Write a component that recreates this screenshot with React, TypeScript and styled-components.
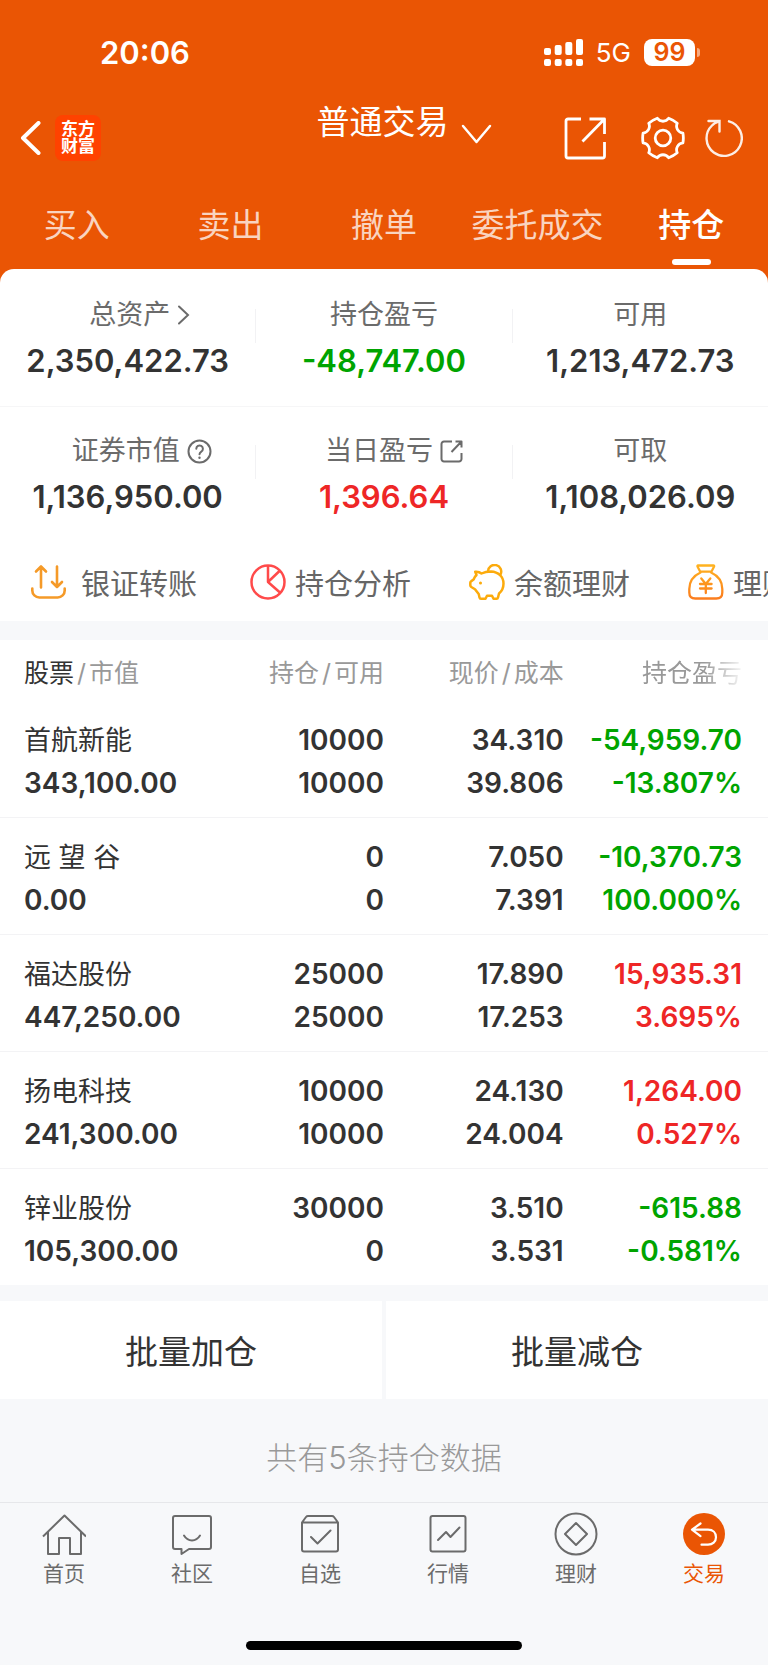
import React, { useState } from 'react';
import styled, { createGlobalStyle, css } from 'styled-components';

type Tone = 'normal' | 'up' | 'down';

interface Stat {
  label: string;
  value: string;
  tone?: Tone;
  icon?: React.ReactNode;
  indent?: number;
}

interface Holding {
  name: string;
  marketValue: string;
  position: string;
  available: string;
  price: string;
  cost: string;
  profit: string;
  profitRate: string;
  tone: Tone;
}

const toneColors: Record<Tone, string> = {
  normal: '#333333',
  up: '#ee2626',
  down: '#00a400',
};

const GlobalStyle = createGlobalStyle`
  * {
    box-sizing: border-box;
  }

  body {
    margin: 0;
    background: #f7f8fa;
    color: #333333;
    font-family: Inter, 'Noto Sans CJK SC', sans-serif;
  }

  button {
    margin: 0;
    padding: 0;
    border: 0;
    background: none;
    color: inherit;
    font: inherit;
    cursor: pointer;
  }

  svg {
    display: block;
    flex: none;
  }
`;

const Page = styled.div`
  display: flex;
  flex-direction: column;
`;

const Hero = styled.header`
  background: #ea5504;
  color: #ffffff;
`;

const StatusBar = styled.div`
  display: flex;
  align-items: center;
  justify-content: space-between;
  height: 98px;
  padding: 6px 68px 0 100px;
`;

const Clock = styled.span`
  font-size: 31px;
  font-weight: 600;
`;

const StatusIcons = styled.div`
  display: flex;
  align-items: center;
  gap: 13px;
`;

const Network = styled.span`
  font-size: 26px;
`;

const Battery = styled.div`
  display: flex;
  align-items: center;
  gap: 2px;
`;

const BatteryLevel = styled.span`
  width: 51px;
  border-radius: 8px;
  background: #ffffff;
  color: #ea5504;
  font-size: 25px;
  font-weight: 600;
  line-height: 27px;
  text-align: center;
`;

const BatteryTip = styled.span`
  width: 3px;
  height: 9px;
  border-radius: 0 4px 4px 0;
  background: rgba(255, 255, 255, 0.5);
`;

const TitleBar = styled.div`
  display: flex;
  align-items: center;
  height: 80px;
`;

const TitleSide = styled.div<{ $end?: boolean }>`
  display: flex;
  flex: 1;
  align-items: center;
  gap: ${({ $end }) => ($end ? '0' : '14px')};
  justify-content: ${({ $end }) => ($end ? 'flex-end' : 'flex-start')};
  padding: ${({ $end }) => ($end ? '0 25px 0 0' : '0 0 0 20px')};
`;

const Logo = styled.div`
  width: 46px;
  padding: 6px 0;
  border-radius: 8px;
  background: #ff4200;
  font-size: 17px;
  font-weight: 700;
  line-height: 17px;
  text-align: center;
`;

const AccountSwitch = styled.button`
  display: flex;
  align-self: flex-start;
  gap: 12px;
  padding-left: 45px;
  font-size: 33px;
  line-height: 49px;

  svg {
    margin-top: 26px;
  }
`;

const ToolButton = styled.button<{ $gap: number }>`
  margin-left: ${({ $gap }) => $gap}px;
`;

const Tabs = styled.nav`
  display: grid;
  grid-template-columns: repeat(5, 1fr);
`;

const Tab = styled.button<{ $active: boolean }>`
  display: flex;
  flex-direction: column;
  align-items: center;
  gap: 10px;
  padding: 23px 0 4px;
  color: ${({ $active }) => ($active ? '#ffffff' : 'rgba(255, 255, 255, 0.75)')};
  font-size: 33px;
  font-weight: ${({ $active }) => ($active ? 500 : 400)};
  line-height: 48px;

  &::after {
    content: '';
    width: 39px;
    height: 6px;
    border-radius: 3px;
    background: ${({ $active }) => ($active ? '#ffffff' : 'transparent')};
  }
`;

const Summary = styled.section`
  border-radius: 14px 14px 0 0;
  background: #ffffff;
`;

const StatRow = styled.div`
  display: grid;
  grid-template-columns: 1fr 1px 1fr 1px 1fr;
  padding: 26px 0 27px;

  & + & {
    padding: 24px 0 28px;
    border-top: 1px solid #f6f6f7;
  }
`;

const StatCell = styled.div`
  display: flex;
  flex-direction: column;
  align-items: center;
  gap: 8px;
`;

const StatDivider = styled.span`
  height: 34px;
  margin-top: 14px;
  background: #f2f2f4;
`;

const StatLabel = styled.span<{ $indent: number }>`
  display: flex;
  align-items: center;
  gap: 7px;
  padding-left: ${({ $indent }) => $indent}px;
  color: #6b6b6b;
  font-size: 27px;
  line-height: 40px;
`;

const StatValue = styled.strong<{ $tone: Tone }>`
  color: ${({ $tone }) => toneColors[$tone]};
  font-size: 31px;
  font-weight: 600;
  line-height: 36px;
`;

const Shortcuts = styled.div`
  display: flex;
  overflow: hidden;
  padding: 0 0 0 31px;
  background: #ffffff;
`;

const Shortcut = styled.button<{ $wide?: boolean }>`
  display: flex;
  flex: 0 0 219px;
  align-items: center;
  gap: ${({ $wide }) => ($wide ? 15 : 9)}px;
  height: 78px;
  color: #666666;
  font-size: 29px;
  white-space: nowrap;
`;

const HoldingsTable = styled.table`
  width: 100%;
  margin-top: 19px;
  border-collapse: collapse;
  table-layout: fixed;
  background: #ffffff;
`;

const numberCell = css`
  text-align: right;

  &:last-child {
    padding-right: 26px;
  }
`;

const HeadCell = styled.th<{ $width?: string; $faded?: boolean }>`
  ${numberCell}
  width: ${({ $width }) => $width || 'auto'};
  height: 61px;
  padding: 0;
  color: #999999;
  font-size: 25px;
  font-weight: 400;
  white-space: nowrap;

  &:first-child {
    padding-left: 24px;
    text-align: left;
  }

  ${({ $faded }) =>
    $faded &&
    css`
      mask-image: linear-gradient(to right, #000000 calc(100% - 64px), transparent calc(100% - 22px));
    `}
`;

const HeadMain = styled.span`
  color: #333333;
`;

const Slash = styled.span`
  margin: 0 3px;
`;

const HoldingRow = styled.tr`
  & + & {
    border-top: 1px solid #f3f3f5;
  }
`;

const StockCell = styled.th`
  padding: 18px 0 12px 24px;
  font-size: 27px;
  font-weight: 400;
  line-height: 43px;
  text-align: left;
  white-space: pre;
`;

const NumberCell = styled.td<{ $tone?: Tone }>`
  ${numberCell}
  padding: 18px 0 12px;
  color: ${({ $tone }) => toneColors[$tone || 'normal']};
  font-size: 28px;
  font-weight: 600;
  line-height: 43px;
`;

const Line = styled.div`
  height: 43px;
`;

const Amount = styled(Line)`
  font-size: 28px;
  font-weight: 600;
`;

const BatchActions = styled.div`
  display: grid;
  grid-template-columns: 1fr 1fr;
  gap: 4px;
  margin-top: 16px;
`;

const BatchButton = styled.button`
  height: 98px;
  background: #ffffff;
  font-size: 33px;
`;

const HoldingCount = styled.p`
  margin: 0;
  padding-top: 15px;
  color: #999999;
  font-size: 31px;
  font-weight: 300;
  line-height: 88px;
  text-align: center;
`;

const BottomNav = styled.nav`
  display: grid;
  grid-template-columns: repeat(6, 1fr);
  padding-top: 9px;
  border-top: 1px solid #e6e7ea;
`;

const NavLink = styled.a<{ $active: boolean }>`
  display: flex;
  flex-direction: column;
  align-items: center;
  gap: 4px;
  color: ${({ $active }) => ($active ? '#ea5504' : '#6b6b6b')};
  font-size: 21px;
  line-height: 28px;
  text-decoration: none;
`;

const HomeIndicator = styled.div`
  align-self: center;
  width: 36%;
  height: 9px;
  margin: 53px 0 15px;
  border-radius: 5px;
  background: #000000;
`;

const SignalIcon = () => (
  <svg width="39" height="27" viewBox="0 0 39 27" fill="#fff">
    <rect x="0" y="9" width="7" height="7" rx="2" />
    <rect x="10.7" y="6" width="7" height="10" rx="2" />
    <rect x="21.3" y="3" width="7" height="13" rx="2" />
    <rect x="32" y="0" width="7" height="16" rx="2" />
    <rect x="0" y="20" width="7" height="7" rx="2" />
    <rect x="10.7" y="20" width="7" height="7" rx="2" />
    <rect x="21.3" y="20" width="7" height="7" rx="2" />
    <rect x="32" y="20" width="7" height="7" rx="2" />
  </svg>
);

const BackIcon = () => (
  <svg width="21" height="34" viewBox="0 0 21 34" fill="none" stroke="#fff" strokeWidth="4" strokeLinecap="round" strokeLinejoin="round">
    <path d="M18.500 2 3 17l15.500 15" />
  </svg>
);

const ChevronDownIcon = () => (
  <svg width="31" height="21" viewBox="0 0 31 21" fill="none" stroke="#fff" strokeWidth="2.500" strokeLinecap="round" strokeLinejoin="round">
    <path d="M2 2l13.500 16L29 2" />
  </svg>
);

const ShareIcon = () => (
  <svg width="42" height="43" viewBox="0 0 42 43" fill="none" stroke="#fff" strokeWidth="2.800" strokeLinejoin="round">
    <path d="M17 2H4a2 2 0 0 0-2 2v35a2 2 0 0 0 2 2h34.500a2 2 0 0 0 2-2V25M25.500 2h15v15M40.500 2 18.500 24.500" />
  </svg>
);

// Six flat teeth with a rounded notch between each pair
const gearPoint = (degrees: number, radius: number) => {
  const angle = (degrees * Math.PI) / 180;
  return `${(22 + radius * Math.cos(angle)).toFixed(2)} ${(22 + radius * Math.sin(angle)).toFixed(2)}`;
};

const gearPath = [0, 60, 120, 180, 240, 300]
  .map(
    (angle, index) =>
      `${index === 0 ? 'M' : 'L'}${gearPoint(angle - 14, 20.5)} Q${gearPoint(angle, 20.8)} ${gearPoint(angle + 14, 20.5)} ` +
      `C${gearPoint(angle + 20, 16)} ${gearPoint(angle + 40, 16)} ${gearPoint(angle + 46, 20.5)}`
  )
  .join(' ');

const GearIcon = () => (
  <svg width="44" height="44" viewBox="0 0 44 44" fill="none" stroke="#fff" strokeWidth="2.800" strokeLinejoin="round">
    <path d={`${gearPath} Z`} />
    <circle cx="22" cy="22" r="7.800" />
  </svg>
);

const RefreshIcon = () => (
  <svg width="38" height="40" viewBox="0 0 38 40" fill="none" stroke="#fff" strokeWidth="2.400" strokeLinecap="round" opacity="0.9">
    <path d="M24 3.300A17.600 17.600 0 1 1 7 7.500Q9 5 13.500 3.500" />
    <path d="M3.500 3H14.500V13.500" />
  </svg>
);

const ArrowRightIcon = () => (
  <svg width="13" height="20" viewBox="0 0 13 20" fill="none" stroke="#6b6b6b" strokeWidth="2" strokeLinecap="round">
    <path d="M2 1.500 11 10l-9 8.500" />
  </svg>
);

const HelpIcon = () => (
  <svg width="25" height="25" viewBox="0 0 25 25" fill="none" stroke="#6b6b6b" strokeWidth="2" strokeLinecap="round">
    <circle cx="12.500" cy="12.500" r="11" />
    <path d="M9.300 9.800a3.300 3.300 0 1 1 5 2.800c-1.200.8-1.800 1.400-1.800 2.700" />
    <path d="M12.500 18.600v.2" strokeWidth="2.400" />
  </svg>
);

const DetailIcon = () => (
  <svg width="23" height="23" viewBox="0 0 23 23" fill="none" stroke="#6b6b6b" strokeWidth="2" strokeLinejoin="round">
    <path d="M12 1.500H4a2.500 2.500 0 0 0-2.500 2.500v15A2.500 2.500 0 0 0 4 21.500h15a2.500 2.500 0 0 0 2.500-2.500v-6M15.500 1.500h6v6M21.500 1.500 11.500 12" />
  </svg>
);

const TransferIcon = () => (
  <svg width="35" height="36" viewBox="0 0 35 36" fill="none" stroke="#f59a28" strokeWidth="2.600" strokeLinecap="round" strokeLinejoin="round">
    <path d="M10 23.500V3M5 7.500l5-5 5 5M26 2.500V23M21 18l5 5 5-5M1.300 24.500v2a7 7 0 0 0 7 7h18.400a7 7 0 0 0 7-7v-2" />
  </svg>
);

const AnalysisIcon = () => (
  <svg width="36" height="36" viewBox="0 0 36 36" fill="none" stroke="#ff4a4a" strokeWidth="2.500" strokeLinejoin="round">
    <circle cx="18" cy="18" r="16.500" />
    <path d="M18 1.500V18L29.500 7M18 18l12.500 11" />
  </svg>
);

const PiggyIcon = () => (
  <svg width="36" height="36" viewBox="0 0 36 36" fill="none" stroke="#fcab0c" strokeWidth="2.500" strokeLinecap="round" strokeLinejoin="round">
    <path d="M6.200 7.700c2.400-.2 4.600.3 6.300 1.800C15.500 8 18 7.500 22 7.500c7.500.3 12.500 5.500 12.500 12 0 4-1.500 7.500-4.500 10l-1 4a1.500 1.500 0 0 1-1.500 1.200h-3l-1.500-3h-5l-1.500 3h-4.500a1.500 1.500 0 0 1-1.500-1.200L9.700 30 6 25.200 2.300 23c-.6-.4-1-.9-1-1.700v-2.600c0-.7.3-1.200 1-1.600l2.300-1.600c.6-1.700 1.500-3.200 2.900-4.500Z" />
    <path d="M19 7.300A6.600 6.600 0 1 1 31.500 10.500" />
    <circle cx="11.500" cy="19" r="0.800" fill="#fcab0c" strokeWidth="1.400" />
  </svg>
);

const MoneyBagIcon = () => (
  <svg width="36" height="36" viewBox="0 0 36 36" fill="none" stroke="url(#bag)" strokeWidth="2.300" strokeLinecap="round" strokeLinejoin="round">
    <defs>
      <linearGradient id="bag" x1="0" y1="0" x2="0" y2="36" gradientUnits="userSpaceOnUse">
        <stop offset="0" stopColor="#ffb41f" />
        <stop offset="1" stopColor="#fb7b1e" />
      </linearGradient>
    </defs>
    <path d="M10 1.500h15.500c.6 0 .8.500.6 1l-2.200 4.200c-.3.700-.7 1-1.400 1h-9.400c-.7 0-1.100-.3-1.400-1L9.500 2.500c-.2-.6 0-1 .5-1Z" />
    <path d="M12.500 8.500C5 12 1.300 18.500 1.300 25v3.500c0 4 2 6 6 6h21c4 0 6-2 6-6V25c0-6.500-3.700-13-11.200-16.500" />
    <path d="M13.300 14.500l4.500 5.500 4.500-5.500M12 20h11.600M12 24.500h11.600M17.800 20v9" />
  </svg>
);

const HomeIcon = () => (
  <svg width="44" height="44" viewBox="0 0 44 44" fill="none" stroke="currentColor" strokeWidth="2" strokeLinejoin="round">
    <path d="M1 24.500 22.500 3.500 44 24.500M6 20v22h11V26h11v16h11V20" />
  </svg>
);

const CommunityIcon = () => (
  <svg width="44" height="44" viewBox="0 0 44 44" fill="none" stroke="currentColor" strokeWidth="2" strokeLinecap="round" strokeLinejoin="round">
    <path d="M5 4h34a2 2 0 0 1 2 2v29a2 2 0 0 1-2 2H19l-7.500 5v-5H5a2 2 0 0 1-2-2V6a2 2 0 0 1 2-2Z" />
    <path d="M14 23.500c4 6.500 12 6.500 16 0" />
  </svg>
);

const WatchlistIcon = () => (
  <svg width="44" height="44" viewBox="0 0 44 44" fill="none" stroke="currentColor" strokeWidth="2" strokeLinecap="round" strokeLinejoin="round">
    <path d="M4 10.500v27a2 2 0 0 0 2 2h32a2 2 0 0 0 2-2v-27l-4-5.500q-.8-1-2-1H10q-1.200 0-2 1ZM4 10.500h36M13 25l6.500 6.500L32.500 18.500" />
  </svg>
);

const MarketIcon = () => (
  <svg width="44" height="44" viewBox="0 0 44 44" fill="none" stroke="currentColor" strokeWidth="2" strokeLinecap="round" strokeLinejoin="round">
    <rect x="4.500" y="4" width="35" height="35.500" rx="2" />
    <path d="M12 28l8-8 4.500 5 9-9.500" />
  </svg>
);

const WealthIcon = () => (
  <svg width="44" height="44" viewBox="0 0 44 44" fill="none" stroke="currentColor" strokeWidth="2" strokeLinejoin="round">
    <circle cx="22" cy="22" r="20.500" />
    <path d="M22 11 33 22 22 33 11 22Z" />
  </svg>
);

const TradeIcon = () => (
  <svg width="44" height="44" viewBox="0 0 44 44" fill="none">
    <circle cx="22" cy="22" r="21" fill="currentColor" />
    <path d="M18.500 11.500 10 17.700l8.500 6.500M10.500 17.700h15.500c5 0 8 3 8 7.500s-3.500 7.500-8 7.500h-6.500" stroke="#fff" strokeWidth="2.200" strokeLinecap="round" strokeLinejoin="round" />
  </svg>
);

const tabs = ['买入', '卖出', '撤单', '委托成交', '持仓'];

const statRows: Stat[][] = [
  [
    { label: '总资产', value: '2,350,422.73', icon: <ArrowRightIcon />, indent: 24 },
    { label: '持仓盈亏', value: '-48,747.00', tone: 'down' },
    { label: '可用', value: '1,213,472.73' },
  ],
  [
    { label: '证券市值', value: '1,136,950.00', icon: <HelpIcon />, indent: 28 },
    { label: '当日盈亏', value: '1,396.64', tone: 'up', icon: <DetailIcon />, indent: 20 },
    { label: '可取', value: '1,108,026.09' },
  ],
];

const shortcuts = [
  { label: '银证转账', icon: <TransferIcon />, wide: true },
  { label: '持仓分析', icon: <AnalysisIcon /> },
  { label: '余额理财', icon: <PiggyIcon /> },
  { label: '理财', icon: <MoneyBagIcon /> },
];

const holdings: Holding[] = [
  {
    name: '首航新能',
    marketValue: '343,100.00',
    position: '10000',
    available: '10000',
    price: '34.310',
    cost: '39.806',
    profit: '-54,959.70',
    profitRate: '-13.807%',
    tone: 'down',
  },
  {
    name: '远 望 谷',
    marketValue: '0.00',
    position: '0',
    available: '0',
    price: '7.050',
    cost: '7.391',
    profit: '-10,370.73',
    profitRate: '100.000%',
    tone: 'down',
  },
  {
    name: '福达股份',
    marketValue: '447,250.00',
    position: '25000',
    available: '25000',
    price: '17.890',
    cost: '17.253',
    profit: '15,935.31',
    profitRate: '3.695%',
    tone: 'up',
  },
  {
    name: '扬电科技',
    marketValue: '241,300.00',
    position: '10000',
    available: '10000',
    price: '24.130',
    cost: '24.004',
    profit: '1,264.00',
    profitRate: '0.527%',
    tone: 'up',
  },
  {
    name: '锌业股份',
    marketValue: '105,300.00',
    position: '30000',
    available: '0',
    price: '3.510',
    cost: '3.531',
    profit: '-615.88',
    profitRate: '-0.581%',
    tone: 'down',
  },
];

const navItems = [
  { label: '首页', icon: <HomeIcon /> },
  { label: '社区', icon: <CommunityIcon /> },
  { label: '自选', icon: <WatchlistIcon /> },
  { label: '行情', icon: <MarketIcon /> },
  { label: '理财', icon: <WealthIcon /> },
  { label: '交易', icon: <TradeIcon /> },
];

const App: React.FC = () => {
  const [activeTab, setActiveTab] = useState('持仓');

  return (
    <Page>
      <GlobalStyle />
      <Hero>
        <StatusBar>
          <Clock>20:06</Clock>
          <StatusIcons>
            <SignalIcon />
            <Network>5G</Network>
            <Battery>
              <BatteryLevel>99</BatteryLevel>
              <BatteryTip />
            </Battery>
          </StatusIcons>
        </StatusBar>

        <TitleBar>
          <TitleSide>
            <button type="button" aria-label="返回">
              <BackIcon />
            </button>
            <Logo>
              东方
              <br />
              财富
            </Logo>
          </TitleSide>
          <AccountSwitch type="button">
            普通交易
            <ChevronDownIcon />
          </AccountSwitch>
          <TitleSide $end>
            <ToolButton type="button" aria-label="分享" $gap={0}>
              <ShareIcon />
            </ToolButton>
            <ToolButton type="button" aria-label="设置" $gap={35}>
              <GearIcon />
            </ToolButton>
            <ToolButton type="button" aria-label="刷新" $gap={20}>
              <RefreshIcon />
            </ToolButton>
          </TitleSide>
        </TitleBar>

        <Tabs>
          {tabs.map(tab => (
            <Tab key={tab} type="button" $active={tab === activeTab} onClick={() => setActiveTab(tab)}>
              {tab}
            </Tab>
          ))}
        </Tabs>

        <Summary>
          {statRows.map((row, rowIndex) => (
            <StatRow key={rowIndex}>
              {row.map((stat, index) => (
                <React.Fragment key={stat.label}>
                  {index > 0 && <StatDivider />}
                  <StatCell>
                    <StatLabel $indent={stat.indent || 0}>
                      {stat.label}
                      {stat.icon}
                    </StatLabel>
                    <StatValue $tone={stat.tone || 'normal'}>{stat.value}</StatValue>
                  </StatCell>
                </React.Fragment>
              ))}
            </StatRow>
          ))}
        </Summary>
      </Hero>

      <Shortcuts>
        {shortcuts.map(item => (
          <Shortcut key={item.label} type="button" $wide={item.wide}>
            {item.icon}
            {item.label}
          </Shortcut>
        ))}
      </Shortcuts>

      <HoldingsTable>
        <thead>
          <tr>
            <HeadCell scope="col" $width="31%">
              <HeadMain>股票</HeadMain>
              <Slash>/</Slash>市值
            </HeadCell>
            <HeadCell scope="col" $width="19%">
              持仓<Slash>/</Slash>可用
            </HeadCell>
            <HeadCell scope="col" $width="23.4%">
              现价<Slash>/</Slash>成本
            </HeadCell>
            <HeadCell scope="col" $faded>
              持仓盈亏
            </HeadCell>
          </tr>
        </thead>
        <tbody>
          {holdings.map(item => (
            <HoldingRow key={item.name}>
              <StockCell scope="row">
                <Line>{item.name}</Line>
                <Amount>{item.marketValue}</Amount>
              </StockCell>
              <NumberCell>
                <Line>{item.position}</Line>
                <Line>{item.available}</Line>
              </NumberCell>
              <NumberCell>
                <Line>{item.price}</Line>
                <Line>{item.cost}</Line>
              </NumberCell>
              <NumberCell $tone={item.tone}>
                <Line>{item.profit}</Line>
                <Line>{item.profitRate}</Line>
              </NumberCell>
            </HoldingRow>
          ))}
        </tbody>
      </HoldingsTable>

      <BatchActions>
        <BatchButton type="button">批量加仓</BatchButton>
        <BatchButton type="button">批量减仓</BatchButton>
      </BatchActions>

      <HoldingCount>共有{holdings.length}条持仓数据</HoldingCount>

      <BottomNav>
        {navItems.map(item => (
          <NavLink key={item.label} href="#" $active={item.label === '交易'}>
            {item.icon}
            {item.label}
          </NavLink>
        ))}
      </BottomNav>
      <HomeIndicator />
    </Page>
  );
};

export default App;
